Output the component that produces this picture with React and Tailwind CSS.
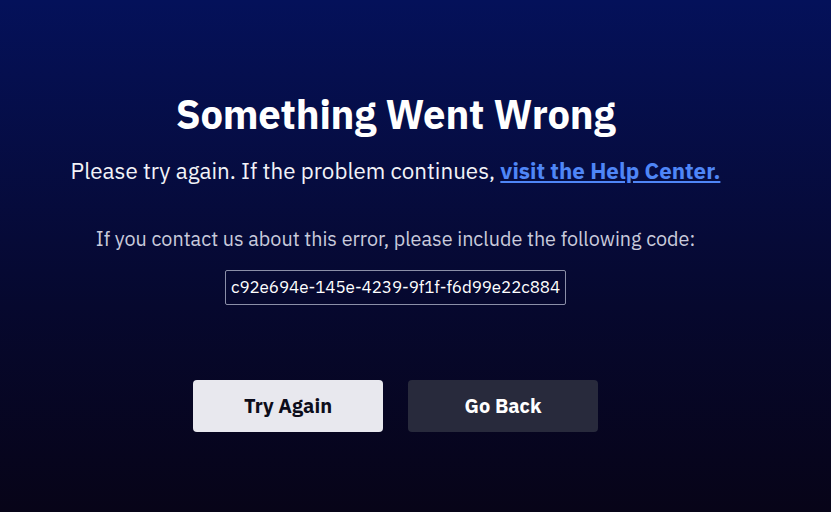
import React from 'react';

const ErrorPage = () => {
    const errorCode = 'c92e694e-145e-4239-9f1f-f6d99e22c884';

    return (
        <div
            className="h-[512px] w-full pr-[40px] flex flex-col items-center bg-gradient-to-b from-[#04115a] via-[#06082e] via-60% to-[#070418] text-white"
            style={{ fontFamily: '"IBM Plex Sans", Roboto, "Liberation Sans", sans-serif' }}
        >
            <h1 className="mt-[90px] text-[40px] leading-[48px] font-bold tracking-[-0.2px]">
                Something Went Wrong
            </h1>

            <p className="mt-[18px] text-[22.4px] leading-[30px] text-[#f2f3f8]">
                Please try again. If the problem continues,{' '}
                <a href="#" className="font-bold text-[#4f86f7] underline underline-offset-2">
                    visit the Help Center.
                </a>
            </p>

            <p className="mt-[39px] text-[19.8px] leading-[28px] text-[#c9cbdc]">
                If you contact us about this error, please include the following code:
            </p>

            <div className="mt-[17px] h-[35px] px-[5px] flex items-center border border-[#8b8fa8] rounded-[2px] text-[17px] text-white tracking-[-0.1px]">
                {errorCode}
            </div>

            {/* Actions */}
            <div className="mt-[75px] flex gap-[25px]">
                <button className="w-[190px] h-[52px] rounded-[4px] bg-[#e8e8ee] text-[#0d0d1a] text-[20px] font-bold">
                    Try Again
                </button>
                <button className="w-[190px] h-[52px] rounded-[4px] bg-[#282a3c] text-white text-[20px] font-bold">
                    Go Back
                </button>
            </div>
        </div>
    );
};

export default function App() {
    return <ErrorPage />;
}
